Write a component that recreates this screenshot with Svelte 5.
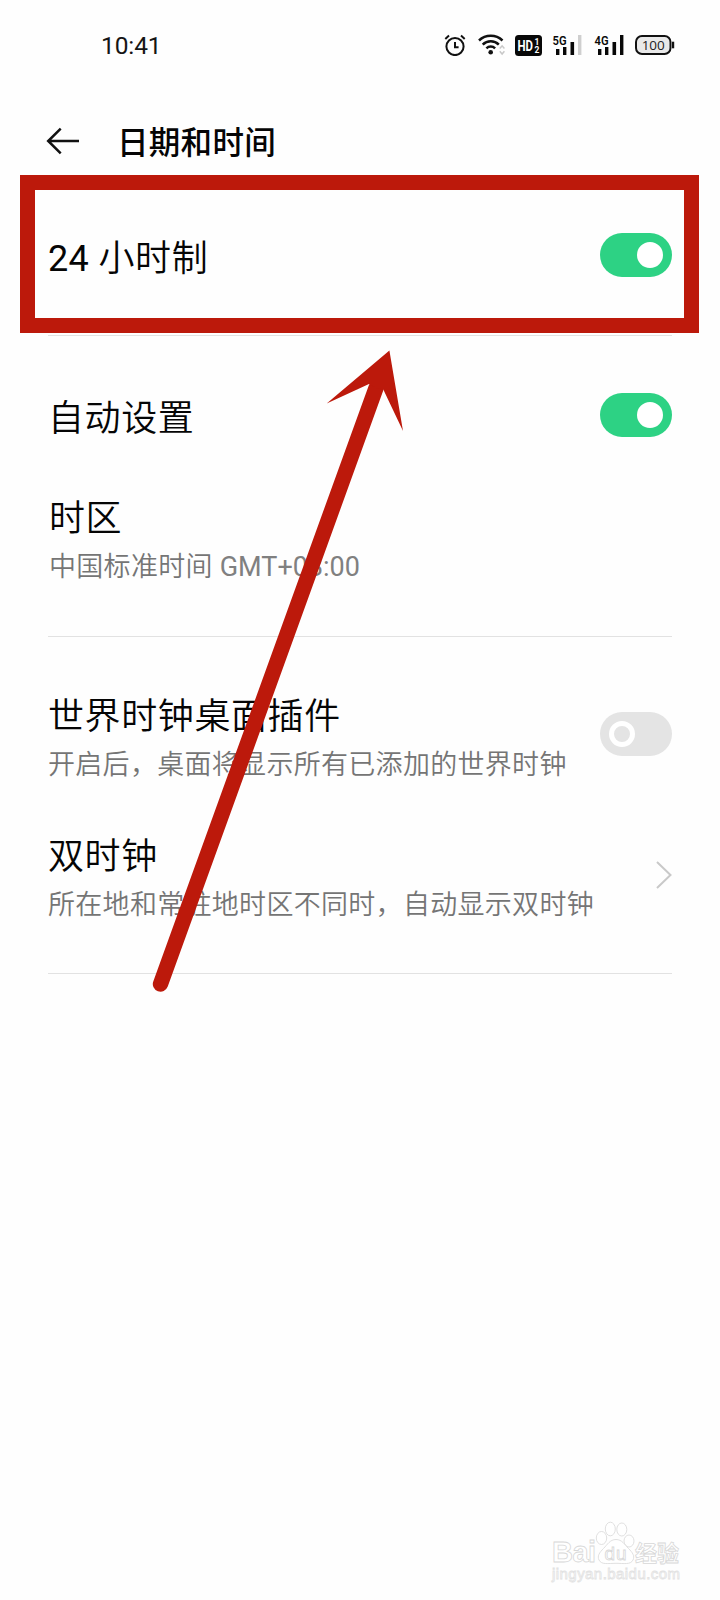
<script lang="ts">
  let use24h = $state(true);
  let autoSet = $state(true);
  let worldClock = $state(false);

  const signals = [
    { label: '5G', dim: true },
    { label: '4G', dim: false },
  ];
</script>

{#snippet toggle(on: boolean, label: string, flip: () => void)}
  <button type="button" class="toggle" class:on role="switch" aria-checked={on} aria-label={label} onclick={flip}>
    <span class="knob"></span>
  </button>
{/snippet}

<main>
  <div class="statusbar">
    <span class="clock">10:41</span>
    <div class="icons">
      <svg class="alarm" width="22" height="22" viewBox="0 0 22 22" fill="none" stroke="#111" stroke-width="2">
        <circle cx="11" cy="12.5" r="8.6" />
        <path d="M11 8v5.2h3.6M1.3 4.9 5 1.6M20.7 4.9 17 1.6" />
      </svg>
      <svg class="wifi" width="28" height="22" viewBox="0 0 28 22" fill="none">
        <g stroke="#111" stroke-width="2.5">
          <path d="M1 6.5a17 17 0 0 1 23.5 0" />
          <path d="M4.7 10.6a11.5 11.5 0 0 1 16.1 0" />
          <path d="M8.4 14.4a6.2 6.2 0 0 1 8.7 0" />
        </g>
        <circle cx="12.7" cy="18.2" r="2.3" fill="#111" />
        <path d="m21.8 14.5 2.3-2.7 2.3 2.7M21.8 17.3l2.3 2.7 2.3-2.7" stroke="#c8c8c8" stroke-width="1.5" />
      </svg>
      <svg class="hd" width="27" height="21" viewBox="0 0 27 21">
        <rect width="27" height="21" rx="3.5" fill="#080808" />
        <g fill="#fff" font-family="Roboto, sans-serif" font-weight="700">
          <text x="2.5" y="15.8" font-size="14.5" textLength="15.5" lengthAdjust="spacingAndGlyphs">HD</text>
          <text x="19.4" y="10.2" font-size="8.5">1</text>
          <text x="19.4" y="18.4" font-size="8.5">2</text>
        </g>
      </svg>
      {#each signals as s}
        <svg class="signal" width="31" height="26" viewBox="0 -2 31 26" fill="#080808">
          <text x="0.5" y="11" font-size="13.5" font-weight="600" font-family="Roboto, sans-serif" textLength="14" lengthAdjust="spacingAndGlyphs">{s.label}</text>
          <rect x="4" y="15" width="3.4" height="6" />
          <rect x="11" y="13" width="3.4" height="8" />
          <rect x="18.5" y="8" width="3.6" height="13" />
          <rect x="26" y="1" width="3.4" height="20" fill={s.dim ? '#cfcfcf' : '#080808'} />
        </svg>
      {/each}
      <svg class="battery" width="40" height="20" viewBox="0 0 40 20">
        <rect x="1" y="1" width="34.5" height="18" rx="6" fill="#e9e9e9" stroke="#111" stroke-width="2" />
        <rect x="37" y="6.7" width="2.2" height="6.6" fill="#111" />
        <text x="18.2" y="14.9" text-anchor="middle" font-family="'Open Sans', sans-serif" font-size="13.5" fill="#222" textLength="23">100</text>
      </svg>
    </div>
  </div>

  <header>
    <svg width="34" height="28" viewBox="0 0 34 28" fill="none" stroke="#111" stroke-width="2.5">
      <path d="M33 14H2.2M14.7 1.7 2.2 14l12.5 12.3" />
    </svg>
    <h1>日期和时间</h1>
  </header>

  <section>
    <div class="row hour">
      <h2><span class="num">24</span> 小时制</h2>
      {@render toggle(use24h, '24 小时制', () => (use24h = !use24h))}
    </div>
  </section>

  <section>
    <div class="row auto">
      <h2>自动设置</h2>
      {@render toggle(autoSet, '自动设置', () => (autoSet = !autoSet))}
    </div>
    <div class="row zone">
      <div>
        <h2>时区</h2>
        <p>中国标准时间 <span class="gmt">GMT+08:00</span></p>
      </div>
    </div>
  </section>

  <section>
    <div class="row world">
      <div>
        <h2>世界时钟桌面插件</h2>
        <p>开启后，桌面将显示所有已添加的世界时钟</p>
      </div>
      {@render toggle(worldClock, '世界时钟桌面插件', () => (worldClock = !worldClock))}
    </div>
    <div class="row dual">
      <div>
        <h2>双时钟</h2>
        <p>所在地和常驻地时区不同时，自动显示双时钟</p>
      </div>
      <svg width="16" height="28" viewBox="0 0 16 28" fill="none" stroke="#c9c9c9" stroke-width="2">
        <path d="M1 1l13.5 13L1 27" />
      </svg>
    </div>
  </section>

  <div class="frame"></div>
  <svg class="arrow" width="720" height="1600" viewBox="0 0 720 1600">
    <path d="M160.5 984 376 388" stroke="#bc190b" stroke-width="15.4" stroke-linecap="round" />
    <path d="M389.4 350.5 403 431 383.3 389.5 376 388 369 384 326.7 403.5z" fill="#bc190b" />
  </svg>

  <svg class="watermark" width="134" height="66" viewBox="0 0 134 66" fill="#fff" stroke="#d8d8d8" stroke-width="0.8">
    <text x="2" y="42" font-family="'Liberation Sans', sans-serif" font-weight="700" font-size="29" textLength="44">Bai</text>
    <g>
      <ellipse cx="51.5" cy="18" rx="5.2" ry="6.5" />
      <ellipse cx="60.3" cy="9" rx="5" ry="6.8" />
      <ellipse cx="71.8" cy="9.5" rx="5" ry="6.5" />
      <ellipse cx="79" cy="21" rx="5" ry="6" />
      <path d="M66 19.5c-6 0-8.5 5-12.5 9-4 4-6.5 7.5-4.5 11.5 2.5 5 9 3.300 17 3.300s14.500 1.700 17-3.300c2-4-.5-7.500-4.500-11.500-4-4-6.500-9-12.500-9z" />
    </g>
    <text x="54.5" y="40" font-family="'Liberation Sans', sans-serif" font-size="19" textLength="22">du</text>
    <text x="85" y="40.5" font-family="'Noto Sans CJK SC', sans-serif" font-weight="700" font-size="22">经验</text>
    <text x="2" y="59" font-family="'Liberation Sans', sans-serif" font-size="15" stroke="#e2e2e2" textLength="128">jingyan.baidu.com</text>
  </svg>
</main>

<style>
  :global(body) {
    margin: 0;
    background: #fdfdfd;
  }
  main {
    position: relative;
    width: 720px;
    height: 1600px;
    overflow: hidden;
    background: #fefefe;
    color: #050505;
    font-family: Roboto, 'Noto Sans CJK SC', sans-serif;
  }
  h1,
  h2,
  p {
    margin: 0;
    white-space: nowrap;
  }
  .statusbar {
    display: flex;
    align-items: center;
    justify-content: space-between;
    height: 90px;
    box-sizing: border-box;
    padding: 0 45px 0 101px;
  }
  .clock {
    font-size: 24.5px;
    letter-spacing: -0.1px;
    color: #151515;
  }
  .icons {
    display: flex;
    align-items: center;
  }
  .icons svg {
    display: block;
  }
  .wifi {
    margin-left: 12px;
  }
  .hd {
    margin-left: 9px;
  }
  .signal {
    margin-left: 10.5px;
  }
  .battery {
    margin-left: 10.5px;
  }
  header {
    display: flex;
    align-items: center;
    gap: 37px;
    height: 85px;
    box-sizing: border-box;
    padding: 20px 45px 0 46px;
  }
  header svg {
    margin-top: -3px;
  }
  h1 {
    font-size: 31.5px;
    line-height: 40px;
    font-weight: 500;
    letter-spacing: 0.3px;
    margin-top: 2px;
  }
  section {
    margin: 0 48px;
    border-bottom: 1px solid #e2e2e2;
  }
  .row {
    display: flex;
    align-items: center;
    justify-content: space-between;
    box-sizing: border-box;
  }
  h2 {
    font-size: 36px;
    line-height: 48px;
    font-weight: 350;
    letter-spacing: 0.6px;
  }
  p {
    margin-top: 6px;
    font-size: 27px;
    line-height: 36px;
    font-weight: 350;
    letter-spacing: 0.3px;
    color: #757575;
  }
  .num {
    font-weight: 400;
    letter-spacing: 0.3px;
  }
  .gmt {
    font-weight: 400;
    letter-spacing: 0;
    color: #808080;
  }
  .hour {
    height: 160px;
  }
  .hour h2,
  .auto h2 {
    padding-top: 7px;
  }
  .auto {
    height: 158px;
  }
  .zone {
    height: 142px;
    padding: 1px 0 0 1px;
    align-items: flex-start;
  }
  .world {
    height: 194px;
  }
  .world > div {
    padding-top: 7px;
  }
  .dual {
    height: 142px;
    align-items: flex-start;
  }
  .dual > div {
    padding-top: 2px;
  }
  .dual svg {
    margin-top: 30px;
  }
  .toggle {
    display: flex;
    align-items: center;
    flex: none;
    width: 72px;
    height: 44px;
    box-sizing: border-box;
    padding: 0 9px;
    border: 0;
    border-radius: 22px;
    background: #e4e4e4;
    cursor: pointer;
  }
  .toggle.on {
    background: #2dd284;
    justify-content: flex-end;
  }
  .knob {
    width: 26px;
    height: 26px;
    box-sizing: border-box;
    border: 5px solid #fff;
    border-radius: 50%;
  }
  .on .knob {
    background: #fff;
  }
  .frame {
    position: absolute;
    left: 20px;
    top: 175px;
    width: 679px;
    height: 158px;
    box-sizing: border-box;
    border: 15px solid #bc190b;
    pointer-events: none;
  }
  .arrow {
    position: absolute;
    left: 0;
    top: 0;
    pointer-events: none;
  }
  .watermark {
    position: absolute;
    left: 550px;
    top: 1520px;
  }
</style>
